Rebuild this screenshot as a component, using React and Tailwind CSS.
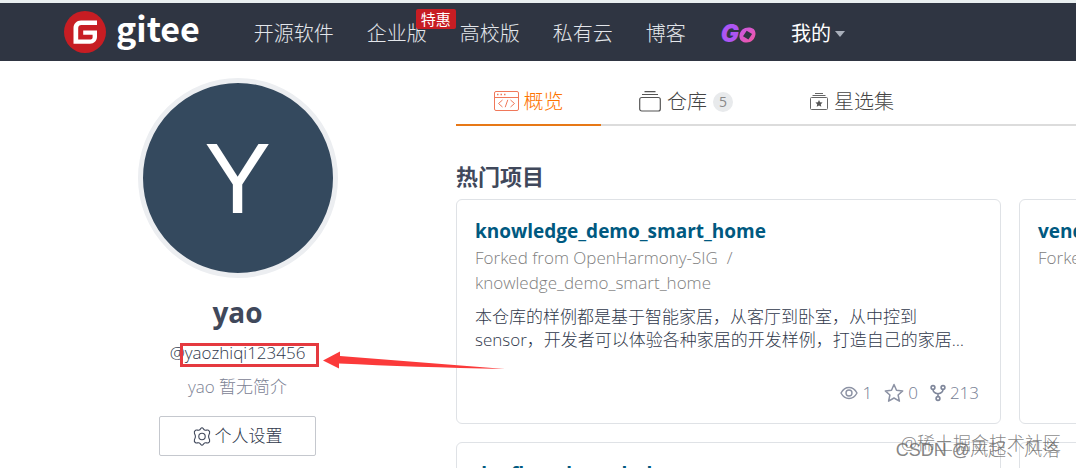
import React from "react";

const navLink = "text-xl font-light leading-8 text-[#e3e6eb]";

function GiteeMark() {
  return (
    <svg viewBox="0 0 42 42" className="size-[42px] shrink-0" aria-hidden="true">
      <circle cx="21" cy="21" r="21" fill="#c71d23" />
      <path
        d="M33 9.500v4.600H17.200c-1.700 0-3 1.300-3 3v11.400h12.400c1.100 0 2-.9 2-2v-2.700h-9.400v-4.400H33v6.300c0 4-3 7-7 7H9.500V17c0-4.300 3.200-7.500 7.500-7.500z"
        fill="#fff"
      />
    </svg>
  );
}

function GoMark() {
  return (
    <span className="flex items-end">
      <span className="font-['Inter',sans-serif] text-2xl leading-6 font-black text-[#ad55f3] italic">G</span>
      <svg viewBox="0 0 17 16" className="mb-[3px] h-4 w-[17px]" aria-hidden="true">
        <defs>
          <linearGradient id="go" x1="0" x2="1" y1="0" y2="1">
            <stop offset="0" stopColor="#c558e8" />
            <stop offset="1" stopColor="#f4569f" />
          </linearGradient>
        </defs>
        <path
          fill="url(#go)"
          fillRule="evenodd"
          d="M9.500 .5c5 0 7.500 2.800 6.900 7.300c-.7 4.500-3.900 7.700-8.700 7.700c-5 0-7.800-3-7.200-7.500C1.200 3.500 4.700 .5 9.500 .5zM7.700 3.800l-3.700 5.400 5.400 3.200 3.700-5.400z"
        />
      </svg>
    </span>
  );
}

function CodeWindowIcon() {
  return (
    <svg viewBox="0 0 26 21" className="h-[21px] w-[26px]" fill="none" stroke="#f0785a" aria-hidden="true">
      <rect x="0.500" y="0.500" width="24" height="19" rx="1.500" />
      <path d="M.5 6.500h24" />
      <path d="M3 3.500h1.500M6.500 3.500h1.500M10 3.500h1.500" strokeWidth="1.500" />
      <path d="M8.500 9l-4 3.500 4 3.500M16.500 9l4 3.500-4 3.500M13.800 8.800l-2.600 7.400" />
    </svg>
  );
}

function StackIcon() {
  return (
    <svg viewBox="0 0 22 21" className="h-[21px] w-[22px]" fill="none" stroke="#555" strokeWidth="1.200" aria-hidden="true">
      <rect x="0.700" y="6.500" width="20.600" height="13.500" rx="2" />
      <path d="M3 3.500h16M5.500 .7h11" />
    </svg>
  );
}

function StarStackIcon() {
  return (
    <svg viewBox="0 0 18 17" className="h-[17px] w-[18px]" fill="none" stroke="#666" aria-hidden="true">
      <rect x="0.500" y="4.500" width="17" height="12" rx="1" />
      <path d="M2.500 2.500h13M5 .5h8" />
      <path d="M9 7l1.100 2.300 2.500.3-1.800 1.700.5 2.500L9 12.600l-2.300 1.200.5-2.500-1.800-1.700 2.500-.3z" fill="#555" stroke="none" />
    </svg>
  );
}

function GearIcon() {
  return (
    <svg viewBox="0 0 18 19" className="h-[19px] w-[18px]" fill="none" stroke="#40485b" strokeWidth="1.100" strokeLinejoin="round" aria-hidden="true">
      <path d="M9 .8c1.200 0 1.500 1.800 2.700 2.300s2.700-.5 3.700.1 1.500 2 1.200 3-1 1.800-1 3.300.7 2.200 1 3.300-.2 2.400-1.200 3-2.500-.4-3.700.1S10.200 18.200 9 18.200s-1.500-1.800-2.700-2.300-2.700.5-3.700-.1-1.500-2-1.200-3 1-1.800 1-3.300-.7-2.200-1-3.300.2-2.400 1.200-3 2.500.4 3.700-.1S7.800.8 9 .8z" />
      <circle cx="9" cy="9.500" r="3.200" />
    </svg>
  );
}

function EyeIcon() {
  return (
    <svg viewBox="0 0 18 14" className="h-[14px] w-[18px]" fill="none" stroke="#8c92a4" strokeWidth="1.400" aria-hidden="true">
      <path d="M1 7c2-3.700 4.700-5.500 8-5.500s6 1.800 8 5.500c-2 3.700-4.700 5.500-8 5.500S3 10.700 1 7z" />
      <circle cx="9" cy="7" r="3" />
    </svg>
  );
}

function StarIcon() {
  return (
    <svg viewBox="0 0 20 20" className="size-5" fill="none" stroke="#8c92a4" strokeWidth="1.500" strokeLinejoin="round" aria-hidden="true">
      <path d="M10 1.500l2.500 5.700 6.200.7-4.600 4.100 1.300 6.200-5.400-3.200-5.400 3.200L5.900 12 1.300 7.900l6.200-.7z" />
    </svg>
  );
}

function ForkIcon() {
  return (
    <svg viewBox="0 0 16 18" className="h-[18px] w-4" fill="none" stroke="#7f879b" strokeWidth="1.600" aria-hidden="true">
      <circle cx="3" cy="3.500" r="1.900" />
      <circle cx="13" cy="3.500" r="1.900" />
      <circle cx="8" cy="14.500" r="1.900" />
      <path d="M3 5.400c0 2.600 1.200 3.600 5 4.300c3.800-.7 5-1.700 5-4.300M8 9.500v3" />
    </svg>
  );
}

function ProjectCard({ name, origin, originRepo, description, stats }) {
  return (
    <article className="flex h-[225px] flex-col rounded-md border border-[#dfe2e6] px-[18px] pt-[18px] pb-4">
      <h3 className="text-[19px] leading-[27px] font-bold text-[#005980]">
        <a href="#project">{name}</a>
      </h3>
      {origin && (
        <p className="text-[17px] leading-[25px] font-light text-[#808080]">
          Forked from {origin}&nbsp; /<br />
          {originRepo}
        </p>
      )}
      {description && (
        <p className="mt-[10px] mr-4 line-clamp-2 text-[17px] leading-[23px] font-light text-[#30384b]">{description}</p>
      )}
      {stats && (
        <ul className="mt-auto mr-[3px] flex items-center justify-end gap-3 text-[17px] leading-7 font-light text-[#747c92]">
          <li className="flex items-center gap-1"><EyeIcon />{stats[0]}</li>
          <li className="flex items-center gap-1"><StarIcon />{stats[1]}</li>
          <li className="flex items-center gap-1"><ForkIcon />{stats[2]}</li>
        </ul>
      )}
    </article>
  );
}

export default function App() {
  return (
    <div className="relative h-screen overflow-hidden bg-white font-['Open_Sans','Noto_Sans_CJK_SC',sans-serif] text-[#40485b]">
      <header className="flex h-[61px] items-center border-t-[3px] border-[#e9eff0] bg-[#2f3542] pl-16">
        <a href="#home" className="flex items-center gap-[10px]">
          <GiteeMark />
          <span className="pb-2 font-['Noto_Sans_CJK_SC',sans-serif] text-[34px] leading-10 font-bold text-white">gitee</span>
        </a>
        <nav className="ml-[54px] flex items-center gap-[33px] pt-[3px]">
          <a href="#open" className={navLink}>开源软件</a>
          <a href="#enterprise" className={`${navLink} relative`}>
            企业版
            <span className="absolute -top-[9px] left-[49px] rounded-xs bg-[#c71d23] px-[5px] text-[15px] leading-5 font-normal whitespace-nowrap text-white">特惠</span>
          </a>
          <a href="#edu" className={navLink}>高校版</a>
          <a href="#cloud" className={navLink}>私有云</a>
          <a href="#blog" className={navLink}>博客</a>
          <a href="#go" aria-label="Go" className="px-0.5"><GoMark /></a>
          <button type="button" className="flex items-center gap-1 text-xl leading-8 text-white">
            我的
            <svg viewBox="0 0 10 6" className="h-[6px] w-[10px]" aria-hidden="true"><path d="M0 0h10L5 6z" fill="#a9afba" /></svg>
          </button>
        </nav>
      </header>

      <div className="flex items-start">
        <aside className="ml-[119px] flex w-[237px] shrink-0 flex-col items-center pt-[17px]">
          <div className="flex size-[200px] items-center justify-center rounded-full border-[5px] border-[#eceef1] bg-[#34495e] font-['Liberation_Sans',sans-serif] text-[100px] leading-none text-white">Y</div>
          <h1 className="mt-4 text-[28px] leading-9 font-bold">yao</h1>
          <p className="mt-[11px] text-[17px] leading-6 font-light text-[#30384b]">@yaozhiqi123456</p>
          <p className="mt-[10px] text-[17px] leading-6 font-light text-[#7c8294]">yao 暂无简介</p>
          <button type="button" className="mt-[17px] flex h-10 w-[157px] items-center justify-center gap-1 rounded-xs border border-[#c5c8ce] text-[17px] font-light text-[#30384b]">
            <GearIcon />
            个人设置
          </button>
        </aside>

        <main className="ml-[100px] min-w-0 flex-1">
          <div className="min-w-[1108px]">
            <nav className="flex h-[65px] border-b-2 border-[#dcdcdc] text-xl font-light text-[#444]">
              <a href="#overview" className="-mb-[2px] flex w-[145px] items-center justify-center gap-1 border-b-2 border-[#e77817] pt-[18px] text-[#fe7300]">
                <CodeWindowIcon />概览
              </a>
              <a href="#repos" className="flex w-[170px] items-center justify-center gap-[6px] pt-[18px]">
                <StackIcon />仓库
                <span className="rounded-full bg-[#e8eaec] px-[6px] text-sm leading-5 font-normal text-[#888]">5</span>
              </a>
              <a href="#stars" className="flex w-[162px] items-center justify-center gap-[6px] pt-[18px]">
                <StarStackIcon />星选集
              </a>
            </nav>
            <h2 className="mt-[34px] text-[22px] leading-8 font-bold">热门项目</h2>
            <section className="mt-[7px] grid grid-cols-2 gap-[18px]">
              <ProjectCard
                name="knowledge_demo_smart_home"
                origin="OpenHarmony-SIG"
                originRepo="knowledge_demo_smart_home"
                description="本仓库的样例都是基于智能家居，从客厅到卧室，从中控到 sensor，开发者可以体验各种家居的开发样例，打造自己的家居生活，让家居更智能"
                stats={[1, 0, 213]}
              />
              <ProjectCard name="vendor_team_x" origin="OpenHarmony-SIG" />
              <ProjectCard name="danflow_demo_hub" />
              <ProjectCard name="vendor_device" />
            </section>
          </div>
        </main>
      </div>

      <div className="pointer-events-none absolute top-[343px] left-[180px] h-6 w-[139px] border-[3px] border-[#e5393f]" />
      <svg viewBox="0 0 182 20" className="pointer-events-none absolute top-[351px] left-[323px] h-5 w-[182px]" aria-hidden="true">
        <path d="M0 9.500L17 .5V5L182 18Q90 16 16 12.500V17.500z" fill="#fb3a3a" />
      </svg>
      <div className="pointer-events-none absolute right-[15px] bottom-[13px] text-lg leading-6 font-light text-[#666]/80">@稀土掘金技术社区</div>
      <div className="pointer-events-none absolute right-[16px] bottom-[6px] font-['Liberation_Sans','Noto_Sans_CJK_SC',sans-serif] text-lg leading-6 font-light text-[#666]/80">CSDN @风起、风落</div>
    </div>
  );
}
